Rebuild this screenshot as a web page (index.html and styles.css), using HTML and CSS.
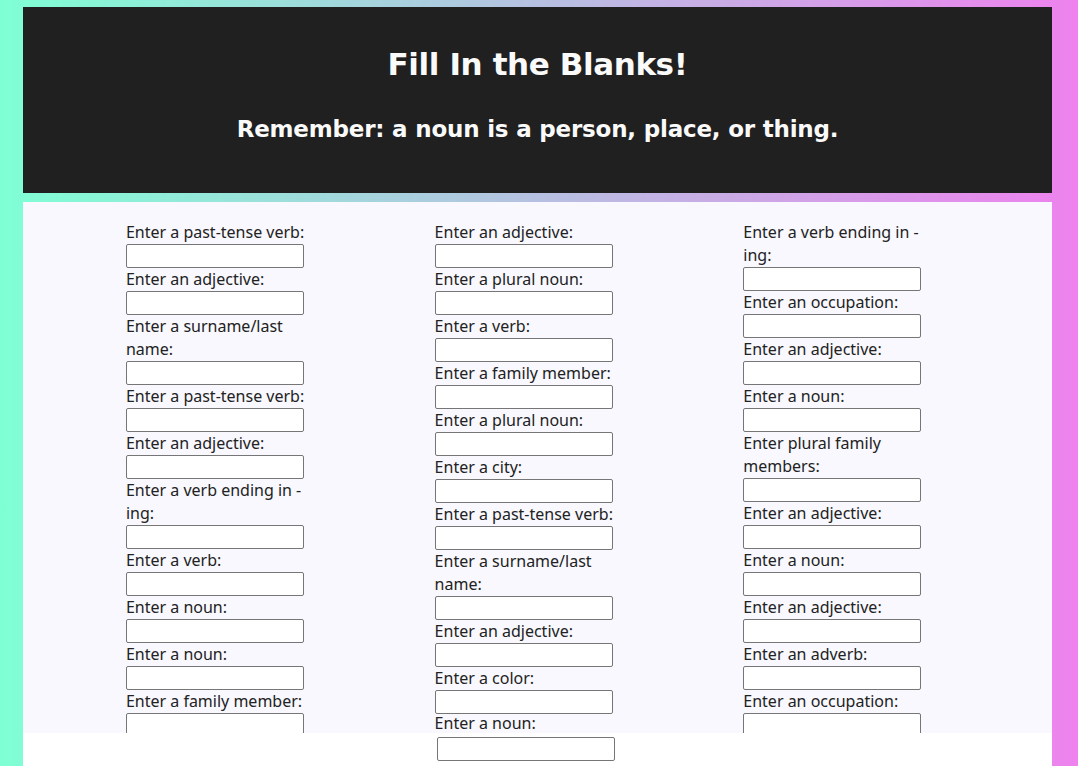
FILE: index.html
```html
<!DOCTYPE html>
<html lang="en">
<head>
<meta charset="utf-8">
<title>Fill In the Blanks!</title>
<link rel="stylesheet" href="styles.css">
</head>
<body>
<header class="banner">
  <h1 class="title">Fill In the Blanks!</h1>
  <h2 class="subtitle">Remember: a noun is a person, place, or thing.</h2>
</header>
<main class="sheet">
  <form class="blanks">
    <div class="col">
      <label class="field">Enter a past-tense verb:<input class="box" type="text"></label>
      <label class="field">Enter an adjective:<input class="box" type="text"></label>
      <label class="field">Enter a surname/last name:<input class="box" type="text"></label>
      <label class="field">Enter a past-tense verb:<input class="box" type="text"></label>
      <label class="field">Enter an adjective:<input class="box" type="text"></label>
      <label class="field">Enter a verb ending in -ing:<input class="box" type="text"></label>
      <label class="field">Enter a verb:<input class="box" type="text"></label>
      <label class="field">Enter a noun:<input class="box" type="text"></label>
      <label class="field">Enter a noun:<input class="box" type="text"></label>
      <label class="field">Enter a family member:<input class="box" type="text"></label>
    </div>
    <div class="col">
      <label class="field">Enter an adjective:<input class="box" type="text"></label>
      <label class="field">Enter a plural noun:<input class="box" type="text"></label>
      <label class="field">Enter a verb:<input class="box" type="text"></label>
      <label class="field">Enter a family member:<input class="box" type="text"></label>
      <label class="field">Enter a plural noun:<input class="box" type="text"></label>
      <label class="field">Enter a city:<input class="box" type="text"></label>
      <label class="field">Enter a past-tense verb:<input class="box" type="text"></label>
      <label class="field">Enter a surname/last name:<input class="box" type="text"></label>
      <label class="field">Enter an adjective:<input class="box" type="text"></label>
      <label class="field">Enter a color:<input class="box" type="text"></label>
      <span class="field field-last">Enter a noun:</span>
    </div>
    <div class="col">
      <label class="field">Enter a verb ending in -ing:<input class="box" type="text"></label>
      <label class="field">Enter an occupation:<input class="box" type="text"></label>
      <label class="field">Enter an adjective:<input class="box" type="text"></label>
      <label class="field">Enter a noun:<input class="box" type="text"></label>
      <label class="field">Enter plural family members:<input class="box" type="text"></label>
      <label class="field">Enter an adjective:<input class="box" type="text"></label>
      <label class="field">Enter a noun:<input class="box" type="text"></label>
      <label class="field">Enter an adjective:<input class="box" type="text"></label>
      <label class="field">Enter an adverb:<input class="box" type="text"></label>
      <label class="field">Enter an occupation:<input class="box" type="text"></label>
    </div>
  </form>
  <div class="overflow-row">
    <input class="box" type="text" aria-label="Enter a noun">
  </div>
</main>
</body>
</html>
```
FILE: styles.css
```css
html, body {
  margin: 0;
  padding: 0;
}

body {
  min-height: 766px;
  box-sizing: border-box;
  padding: 7px 26px 0 23px;
  background: linear-gradient(to right, #7fffd4, #ee82ee);
  font-family: "Noto Sans", "Open Sans", sans-serif;
  color: #222;
}

.banner {
  background: #202020;
  height: 186px;
  box-sizing: border-box;
  padding-top: 37px;
  text-align: center;
  color: #fafafa;
  font-family: "DejaVu Sans", sans-serif;
}

.title {
  margin: 0;
  font-size: 31px;
  line-height: 40px;
  font-weight: bold;
  letter-spacing: -0.4px;
}

.subtitle {
  margin: 30px 0 0;
  font-size: 23px;
  line-height: 30px;
  font-weight: bold;
  letter-spacing: -0.2px;
}

.sheet {
  margin-top: 9px;
  background: #ffffff;
  min-height: 564px;
}

.blanks {
  display: grid;
  grid-template-columns: 1fr 1fr 1fr;
  padding: 19px 0 0 10%;
  height: 531px;
  box-sizing: border-box;
  overflow: hidden;
  background: #f8f8fe;
}

.col {
  display: flex;
  flex-direction: column;
}

.field {
  display: block;
  width: 192px;
  font-size: 16px;
  line-height: 23px;
  color: #222;
}

.field-last {
  line-height: 19px;
}

.box {
  display: block;
  width: 178px;
  height: 24px;
  box-sizing: border-box;
  margin: 0;
  padding: 0 4px;
  border: 1px solid #767676;
  border-radius: 2px;
  background: #fff;
  font: inherit;
}

.overflow-row {
  padding: 4px 0 6px 414px;
}
```
